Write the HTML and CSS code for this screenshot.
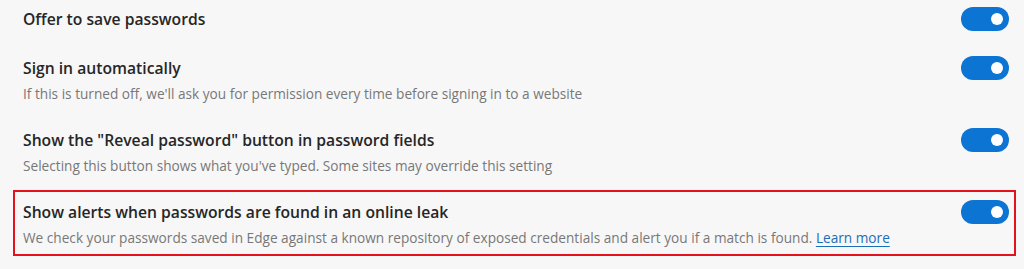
FILE: index.html
```html
<!DOCTYPE html>
<html>
<head>
    <meta charset="UTF-8">
    <title>Password settings</title>
    <link rel="stylesheet" href="styles.css">
</head>
<body>
    <div class="settings">
        <div class="setting first">
            <div class="text">
                <div class="title">Offer to save passwords</div>
            </div>
            <span class="toggle on"></span>
        </div>

        <div class="setting">
            <div class="text">
                <div class="title">Sign in automatically</div>
                <div class="desc">If this is turned off, we'll ask you for permission every time before signing in to a website</div>
            </div>
            <span class="toggle on"></span>
        </div>

        <div class="setting">
            <div class="text">
                <div class="title">Show the "Reveal password" button in password fields</div>
                <div class="desc">Selecting this button shows what you've typed. Some sites may override this setting</div>
            </div>
            <span class="toggle on"></span>
        </div>

        <div class="setting marked">
            <div class="text">
                <div class="title">Show alerts when passwords are found in an online leak</div>
                <div class="desc">We check your passwords saved in Edge against a known repository of exposed credentials and alert you if a match is found. <a href="#">Learn more</a></div>
            </div>
            <span class="toggle on"></span>
        </div>
    </div>
</body>
</html>
```

FILE: styles.css
```css
* {
    margin: 0;
    padding: 0;
    box-sizing: border-box;
}

body {
    background: #f7f7f7;
    font-family: 'Open Sans', 'Noto Sans', sans-serif;
    color: #262626;
}

.setting {
    display: flex;
    align-items: flex-start;
    padding: 12px 15px 11px 23px;
}

.setting.first {
    padding-top: 6px;
}

.setting .text {
    flex: 1;
}

.title {
    font-size: 15.7px;
    font-weight: 600;
    line-height: 26px;
}

.desc {
    margin-top: 3px;
    font-size: 13.65px;
    line-height: 20px;
    color: #777;
}

.desc a {
    color: #1a6fb8;
    text-decoration: underline;
    text-underline-offset: 3px;
}

.setting.marked {
    margin: 3px 8px 0 13px;
    border: 2px solid #e3121c;
    padding: 7px 5px 6px 8px;
}

.toggle {
    position: relative;
    width: 48px;
    height: 24px;
    margin-top: 1px;
    border-radius: 12px;
    background: #cfcfcf;
    flex-shrink: 0;
}

.toggle.on {
    background: #0c74d2;
}

.toggle::after {
    content: '';
    position: absolute;
    top: 6px;
    left: 6px;
    width: 12px;
    height: 12px;
    border-radius: 50%;
    background: #fff;
}

.toggle.on::after {
    left: auto;
    right: 6px;
}
```
